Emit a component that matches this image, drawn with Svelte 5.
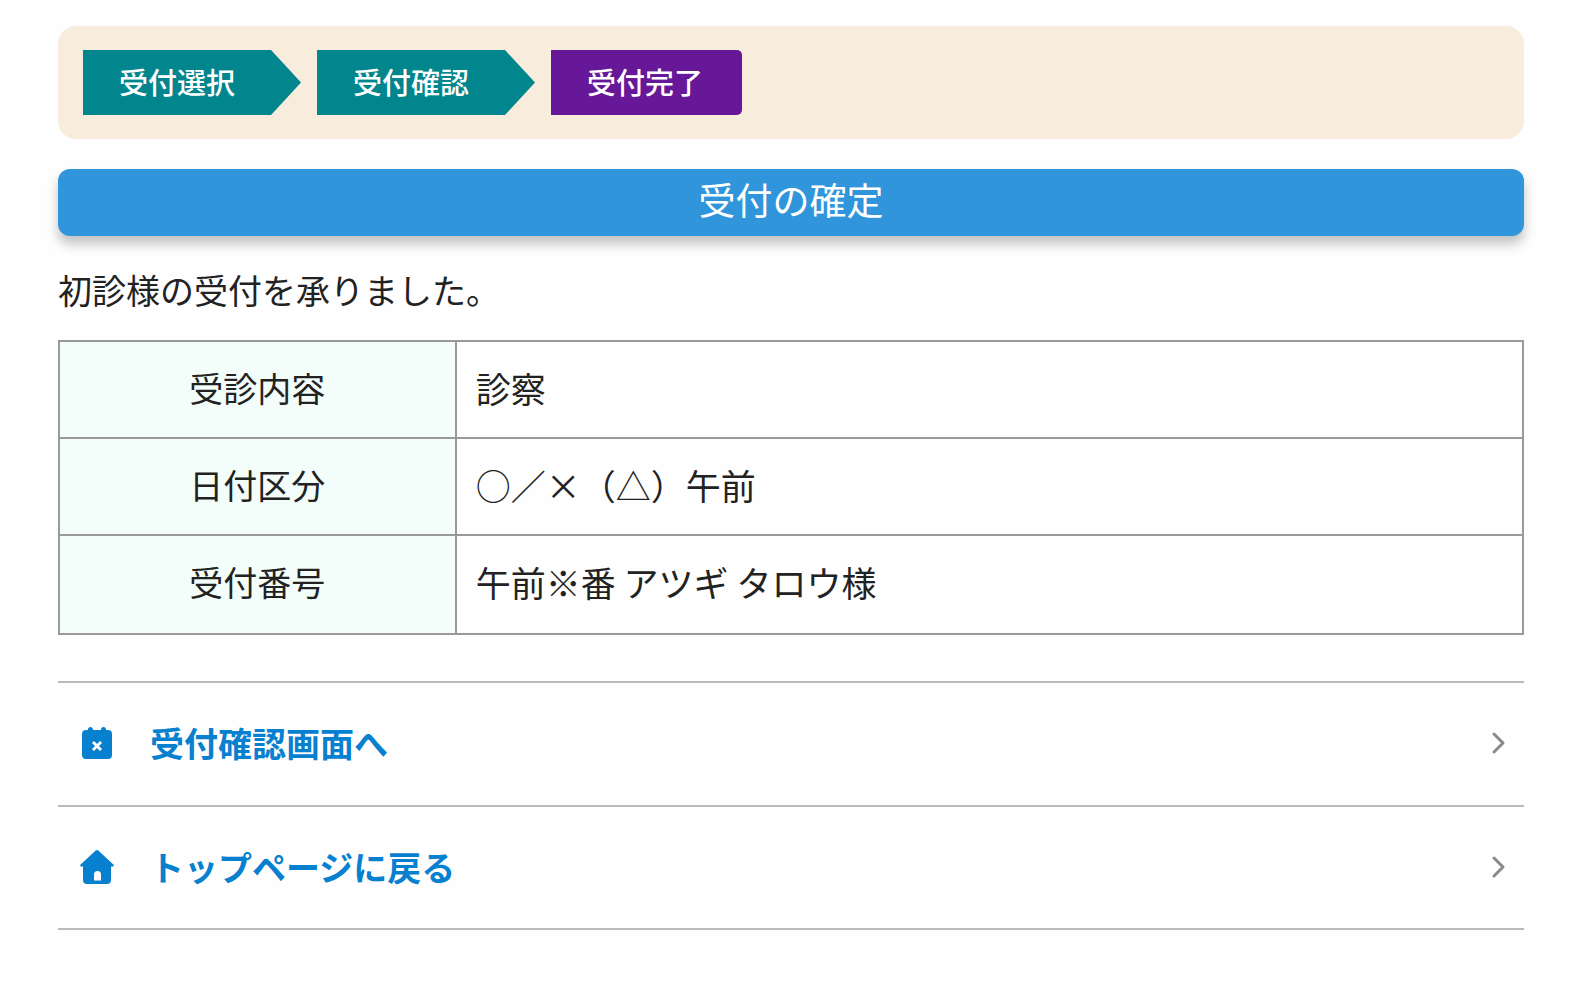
<script lang="ts">
  interface Step {
    label: string;
    current: boolean;
  }

  const steps: Step[] = [
    { label: "受付選択", current: false },
    { label: "受付確認", current: false },
    { label: "受付完了", current: true },
  ];

  const details = [
    { label: "受診内容", value: "診察" },
    { label: "日付区分", value: "○／×（△）午前" },
    { label: "受付番号", value: "午前※番 アツギ タロウ様" },
  ];

  const links = [
    { label: "受付確認画面へ", href: "#confirm", icon: "calendar" },
    { label: "トップページに戻る", href: "#top", icon: "home" },
  ];
</script>

<main class="page">
  <ol class="steps">
    {#each steps as step}
      <li
        class="step"
        class:current={step.current}
        aria-current={step.current ? "step" : undefined}
      >
        {step.label}
      </li>
    {/each}
  </ol>

  <h1 class="title">受付の確定</h1>

  <p class="message">初診様の受付を承りました。</p>

  <table class="details">
    <tbody>
      {#each details as row}
        <tr>
          <th scope="row">{row.label}</th>
          <td>{row.value}</td>
        </tr>
      {/each}
    </tbody>
  </table>

  <nav class="links">
    {#each links as link}
      <a class="link" href={link.href}>
        <svg class="icon" viewBox="0 0 36 36" aria-hidden="true">
          {#if link.icon === "calendar"}
            <path
              fill="currentColor"
              d="M7 5h2V4.500a2.500 2.500 0 0 1 5 0V5h8v-.5a2.500 2.500 0 0 1 5 0V5h2a4 4 0 0 1 4 4v21a4 4 0 0 1-4 4H7a4 4 0 0 1-4-4V9a4 4 0 0 1 4-4z"
            />
            <path
              d="M14 17l8 8M22 17l-8 8"
              fill="none"
              stroke="#fff"
              stroke-width="2.800"
            />
          {:else}
            <path
              fill="currentColor"
              fill-rule="evenodd"
              d="M16.700 1.600a2 2 0 0 1 2.600 0L34.600 15.800q1 1.200-.6 1.700H32V31a4 4 0 0 1-4 4H8a4 4 0 0 1-4-4V17.500H2q-1.600-.5-.6-1.700zM15 31.500h7v-6a3.500 3.500 0 0 0-7 0z"
            />
          {/if}
        </svg>
        <span class="link-label">{link.label}</span>
        <svg class="chevron" viewBox="0 0 16 24" aria-hidden="true">
          <path d="M4 3l9 9-9 9" />
        </svg>
      </a>
    {/each}
  </nav>
</main>

<style>
  :global(body) {
    background: #fefefe;
  }

  .page {
    padding: 26px 64px 60px 58px;
    font-family: "Noto Sans CJK JP", sans-serif;
    font-size: 34px;
    line-height: 48px;
    color: #222;
  }

  .steps {
    display: flex;
    gap: 16px;
    margin: 0;
    padding: 24px 25px;
    list-style: none;
    background: #f8eddc;
    border-radius: 18px;
  }

  .step {
    padding: 0 66px 2px 36px;
    font-size: 29px;
    font-weight: 500;
    line-height: 63px;
    color: #fff;
    background: #00868c;
    clip-path: polygon(
      0 0,
      calc(100% - 30px) 0,
      100% 50%,
      calc(100% - 30px) 100%,
      0 100%
    );
  }

  .step.current {
    padding-right: 39px;
    background: #661898;
    border-radius: 0 5px 5px 0;
    clip-path: none;
  }

  .title {
    margin: 30px 0 0;
    padding-bottom: 7px;
    font-size: 37px;
    font-weight: 400;
    line-height: 60px;
    text-align: center;
    color: #fff;
    background: #3095da;
    border-radius: 12px;
    box-shadow: 0 8px 12px rgba(0, 0, 0, 0.24);
  }

  .message {
    margin: 30px 0 26px;
  }

  .details {
    width: 100%;
    border-collapse: collapse;
    table-layout: fixed;
  }

  .details th,
  .details td {
    padding: 22px 19px 25px;
    border: 2px solid #999;
    font-weight: 400;
  }

  .details th {
    width: 27.1%;
    box-sizing: border-box;
    text-align: center;
    background: #f3fdf9;
  }

  .details td {
    font-size: 35px;
    text-align: left;
  }

  .details tr:last-child th,
  .details tr:last-child td {
    padding-bottom: 27px;
  }

  .links {
    margin-top: 46px;
    border-top: 2px solid #bbb;
  }

  .link {
    display: flex;
    align-items: center;
    padding: 36px 18px 38px 21px;
    border-bottom: 2px solid #bbb;
    color: #0880d0;
    text-decoration: none;
  }

  .link:last-child {
    padding-bottom: 37px;
  }

  .icon {
    width: 36px;
    height: 36px;
    margin-right: 35px;
  }

  .link-label {
    flex: 1;
    font-weight: 700;
  }

  .chevron {
    width: 16px;
    height: 24px;
  }

  .chevron path {
    fill: none;
    stroke: #8a8a8a;
    stroke-width: 3;
    stroke-linecap: round;
    stroke-linejoin: round;
  }
</style>
